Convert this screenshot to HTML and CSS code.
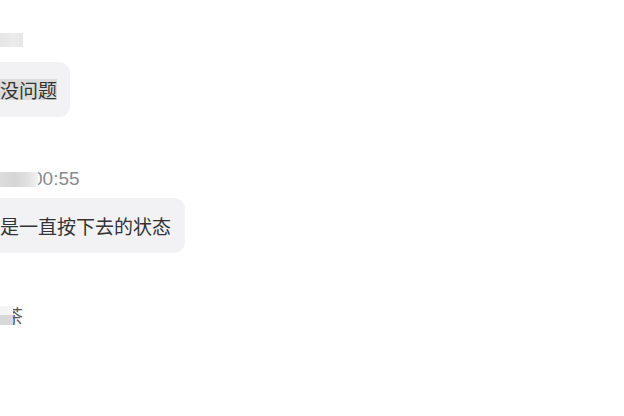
FILE: index.html
```html
<!DOCTYPE html>
<html>
<head>
<meta charset="utf-8">
<link rel="stylesheet" href="styles.css">
</head>
<body>
<div class="chat">
  <div class="meta meta-first">
    <span class="blur blur-name"></span>
  </div>
  <div class="bubble bubble-first"><span class="hl">没问题</span></div>

  <div class="meta meta-second">
    <span class="time">00:55</span>
    <span class="blur blur-time"></span>
  </div>
  <div class="bubble bubble-second">是一直按下去的状态</div>

  <div class="meta meta-third">
    <span class="name3">茶</span>
    <span class="blur blur-third"></span>
  </div>
</div>
</body>
</html>
```
FILE: styles.css
```css
html, body {
  margin: 0;
  padding: 0;
  background: #ffffff;
}
body {
  width: 624px;
  height: 416px;
  overflow: hidden;
  font-family: "Noto Sans CJK SC", "Liberation Sans", sans-serif;
}
.chat {
  display: flex;
  flex-direction: column;
  align-items: flex-start;
}
.meta {
  position: relative;
  height: 20px;
  display: flex;
  align-items: center;
  width: 120px;
}
.meta-first { margin-top: 30px; }
.meta-second { margin-top: 52px; }
.meta-third { margin-top: 50px; height: 24px; }

.blur {
  position: absolute;
  left: 0;
  display: block;
}
.blur-name {
  top: 3px;
  width: 23px;
  height: 14px;
  background: linear-gradient(90deg, #e4e4e4 0%, #ececec 60%, #e6e6e6 100%);
}
.blur-time {
  top: 3px;
  width: 38px;
  height: 15px;
  background: linear-gradient(90deg, #dcdcdc 0%, #d6d6d6 40%, #e2e2e2 75%, #f2f2f2 100%);
}
.blur-third {
  top: 3px;
  width: 13px;
  height: 19px;
  background: linear-gradient(180deg, #f4f4f4 0%, #f4f4f4 45%, #d8d8d8 50%, #d8d8d8 100%);
}
.time {
  font-family: "Liberation Sans", "Noto Sans", sans-serif;
  font-size: 19px;
  color: #8a8a8f;
  margin-left: 32px;
}
.name3 {
  font-size: 18px;
  color: #555;
  margin-left: 5px;
  line-height: 24px;
}
.bubble {
  background: #f2f2f5;
  border-radius: 11px;
  height: 55px;
  display: flex;
  align-items: center;
  font-size: 19px;
  color: #333;
  margin-left: -16px;
  padding: 0 14px 0 16px;
}
.bubble-first { margin-top: 12px; padding-right: 13px; }
.bubble-second { margin-top: 9px; }
.hl {
  display: inline-block;
  background: #dcdcdc;
  line-height: 21px;
  height: 21px;
}
```
